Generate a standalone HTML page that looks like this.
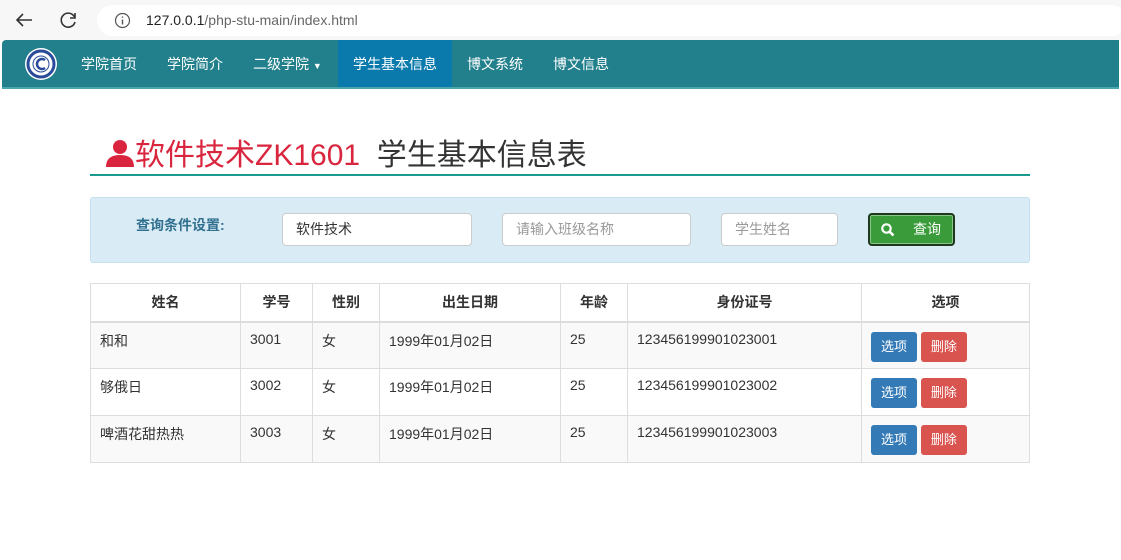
<!DOCTYPE html>
<html><head><meta charset="utf-8"><style>
*{box-sizing:border-box;margin:0;padding:0}
body{width:1121px;height:560px;overflow:hidden;background:#fff;font-family:"Liberation Sans","Noto Sans CJK SC",sans-serif;position:relative}
.chrome{position:absolute;left:0;top:0;width:1121px;height:40px;background:#f7f7f7}
.pill{position:absolute;left:97px;top:5px;width:1030px;height:31px;border-radius:16px;background:#fff}
.url{position:absolute;left:146px;top:12px;font-size:14px;color:#222}
.url span{color:#666}
.nav{position:absolute;left:2px;top:40px;width:1117px;height:49px;background:#22808c;border-radius:4px 0 0 0;border-bottom:2px solid #4aa5ad}
.nav a{position:absolute;top:0;height:47px;line-height:48px;color:#fff;font-size:14px}
.act{background:#0a7aad;padding:0 15px}
h1{position:absolute;left:105px;top:130px;font-weight:normal;font-size:30px;color:#333;white-space:nowrap}
h1 .r{color:#d9263e}
.line{position:absolute;left:90px;top:174px;width:940px;height:2px;background:#1a9a8e}
.q{position:absolute;left:90px;top:197px;width:940px;height:66px;background:#d9ecf6;border:1px solid #c5e0ee;border-radius:3px}
.lbl{position:absolute;left:136px;top:215px;font-size:14px;font-weight:bold;color:#31708f}
.in{position:absolute;top:213px;height:33px;background:#fff;border:1px solid #ccc;border-radius:4px;font-size:14px;line-height:31px;padding-left:13px;color:#999}
.btn{position:absolute;left:868px;top:213px;width:87px;height:33px;background:#3a9b3a;border:2px solid #1e3a1e;border-radius:4px;box-shadow:0 0 0 1px #8bc48b inset;color:#fff;font-size:14px;line-height:29px}
table{position:absolute;left:90px;top:283px;width:940px;border-collapse:collapse;font-size:14px;color:#333}
td,th{border:1px solid #ddd;padding:0 9px}
th{height:38px;border-bottom:2px solid #ddd;text-align:center}
td{height:47px;vertical-align:top;padding-top:8px}
tr.s td{background:#f9f9f9}
.b{display:inline-block;width:46px;height:30px;line-height:30px;text-align:center;color:#fff;border-radius:3px;font-size:13px;margin-top:1px}
</style></head><body>
<div class="chrome">
<svg style="position:absolute;left:14px;top:11px" width="20" height="18"><path d="M18 9H3M9 3L3 9l6 6" fill="none" stroke="#333" stroke-width="1.6"/></svg>
<svg style="position:absolute;left:59px;top:10px" width="20" height="20"><path d="M15.5 7A7 7 0 1 0 16 12" fill="none" stroke="#333" stroke-width="1.6"/><path d="M16 3v5h-5" fill="none" stroke="#333" stroke-width="1.6"/></svg>
<div class="pill"></div>
<svg style="position:absolute;left:114px;top:12px" width="17" height="17"><circle cx="8.5" cy="8.5" r="7" fill="none" stroke="#555" stroke-width="1.2"/><path d="M8.5 7.5v5M8.5 4.5v1.3" stroke="#555" stroke-width="1.4"/></svg>
<div class="url">127.0.0.1<span>/php-stu-main/index.html</span></div>
</div>
<div class="nav">
<svg style="position:absolute;left:22px;top:7px" width="34" height="34"><circle cx="17" cy="17" r="16" fill="#fff"/><circle cx="17" cy="17" r="13" fill="none" stroke="#2a4a9a" stroke-width="3"/><circle cx="17" cy="17" r="8" fill="#fff" stroke="#2a4a9a" stroke-width="1"/><path d="M21 13a5 5 0 1 0 0 8" fill="none" stroke="#2a4a9a" stroke-width="2.5"/></svg>
<a style="left:79px">学院首页</a>
<a style="left:165px">学院简介</a>
<a style="left:251px">二级学院 <span style="font-size:9px">▼</span></a>
<a class="act" style="left:336px">学生基本信息</a>
<a style="left:465px">博文系统</a>
<a style="left:551px">博文信息</a>
</div>
<h1><span class="r"><svg width="30" height="28" style="vertical-align:-2px"><circle cx="15" cy="8" r="7" fill="#d9263e"/><path d="M1 28c0-9 6-12 14-12s14 3 14 12z" fill="#d9263e"/></svg>软件技术ZK1601</span>&nbsp; 学生基本信息表</h1>
<div class="line"></div>
<div class="q"></div>
<div class="lbl">查询条件设置:</div>
<div class="in" style="left:282px;width:190px;color:#333">软件技术</div>
<div class="in" style="left:502px;width:189px">请输入班级名称</div>
<div class="in" style="left:721px;width:117px">学生姓名</div>
<div class="btn"><svg style="position:absolute;left:11px;top:8px" width="14" height="14"><circle cx="5.5" cy="5.5" r="4.2" fill="none" stroke="#fff" stroke-width="2.2"/><path d="M8.5 8.5l4 4" stroke="#fff" stroke-width="2.6"/></svg><span style="position:absolute;left:43px">查询</span></div>
<table>
<tr><th style="width:150px">姓名</th><th style="width:72px">学号</th><th style="width:67px">性别</th><th style="width:181px">出生日期</th><th style="width:67px">年龄</th><th style="width:234px">身份证号</th><th>选项</th></tr>
<tr class="s"><td>和和</td><td>3001</td><td>女</td><td>1999年01月02日</td><td>25</td><td>123456199901023001</td><td><span class="b" style="background:#337ab7">选项</span> <span class="b" style="background:#d9534f">删除</span></td></tr>
<tr><td>够俄日</td><td>3002</td><td>女</td><td>1999年01月02日</td><td>25</td><td>123456199901023002</td><td><span class="b" style="background:#337ab7">选项</span> <span class="b" style="background:#d9534f">删除</span></td></tr>
<tr class="s"><td>啤酒花甜热热</td><td>3003</td><td>女</td><td>1999年01月02日</td><td>25</td><td>123456199901023003</td><td><span class="b" style="background:#337ab7">选项</span> <span class="b" style="background:#d9534f">删除</span></td></tr>
</table>
</body></html>
